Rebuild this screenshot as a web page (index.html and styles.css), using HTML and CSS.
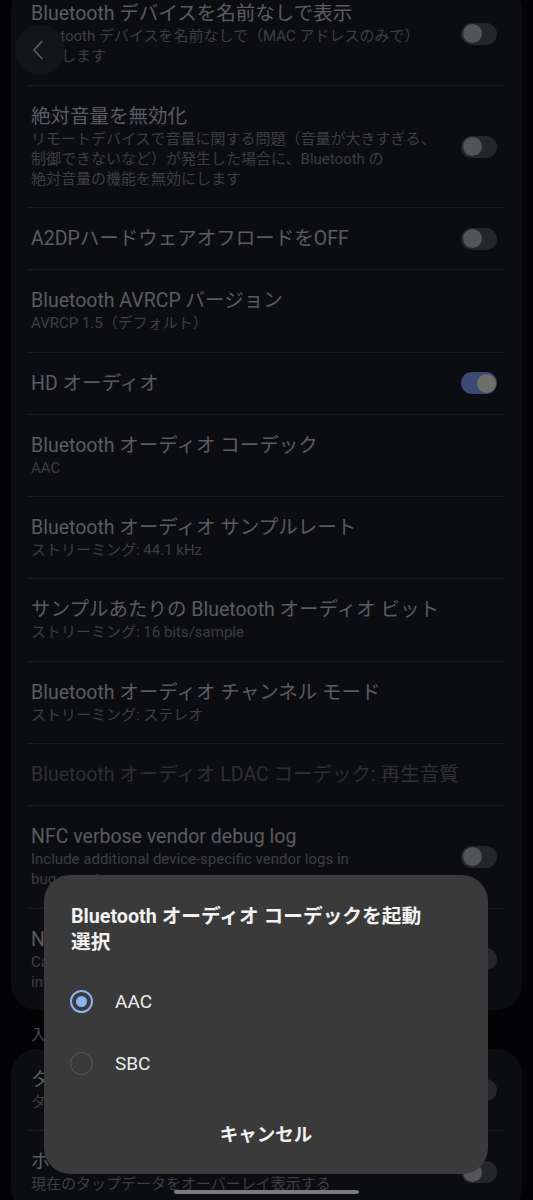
FILE: index.html
```html
<!DOCTYPE html>
<html lang="ja">
<head>
  <meta charset="UTF-8">
  <meta name="viewport" content="width=device-width,initial-scale=1">
  <title>開発者向けオプション</title>
  <link rel="stylesheet" href="styles.css">
</head>
<body>
  <div class="screen">
    <section class="card card-top">
      <div class="row">
        <div class="text">
          <div class="title">Bluetooth デバイスを名前なしで表示</div>
          <div class="summary">Bluetooth デバイスを名前なしで（MAC アドレスのみで）<br>表示します</div>
        </div>
        <span class="switch"><span class="knob"></span></span>
      </div>
      <div class="row">
        <div class="text">
          <div class="title">絶対音量を無効化</div>
          <div class="summary">リモートデバイスで音量に関する問題（音量が大きすぎる、<br>制御できないなど）が発生した場合に、Bluetooth の<br>絶対音量の機能を無効にします</div>
        </div>
        <span class="switch"><span class="knob"></span></span>
      </div>
      <div class="row">
        <div class="text">
          <div class="title">A2DPハードウェアオフロードをOFF</div>
        </div>
        <span class="switch"><span class="knob"></span></span>
      </div>
      <div class="row">
        <div class="text">
          <div class="title">Bluetooth AVRCP バージョン</div>
          <div class="summary">AVRCP 1.5（デフォルト）</div>
        </div>
      </div>
      <div class="row">
        <div class="text">
          <div class="title">HD オーディオ</div>
        </div>
        <span class="switch on"><span class="knob"></span></span>
      </div>
      <div class="row">
        <div class="text">
          <div class="title">Bluetooth オーディオ コーデック</div>
          <div class="summary">AAC</div>
        </div>
      </div>
      <div class="row">
        <div class="text">
          <div class="title">Bluetooth オーディオ サンプルレート</div>
          <div class="summary">ストリーミング: 44.1 kHz</div>
        </div>
      </div>
      <div class="row">
        <div class="text">
          <div class="title">サンプルあたりの Bluetooth オーディオ ビット</div>
          <div class="summary">ストリーミング: 16 bits/sample</div>
        </div>
      </div>
      <div class="row">
        <div class="text">
          <div class="title">Bluetooth オーディオ チャンネル モード</div>
          <div class="summary">ストリーミング: ステレオ</div>
        </div>
      </div>
      <div class="row disabled">
        <div class="text">
          <div class="title">Bluetooth オーディオ LDAC コーデック: 再生音質</div>
        </div>
      </div>
      <div class="row">
        <div class="text">
          <div class="title">NFC verbose vendor debug log</div>
          <div class="summary">Include additional device-specific vendor logs in<br>bug reports.</div>
        </div>
        <span class="switch"><span class="knob"></span></span>
      </div>
      <div class="row">
        <div class="text">
          <div class="title">NFC NCI unfiltered log</div>
          <div class="summary">Capture detail NFC packets, which may contain<br>information.</div>
        </div>
        <span class="switch"><span class="knob"></span></span>
      </div>
    </section>

    <div class="section-label">入力</div>

    <section class="card">
      <div class="row">
        <div class="text">
          <div class="title">タップを表示</div>
          <div class="summary">タップしたときに視覚的フィードバックを表示する</div>
        </div>
        <span class="switch"><span class="knob"></span></span>
      </div>
      <div class="row">
        <div class="text">
          <div class="title">ポインタの位置</div>
          <div class="summary">現在のタップデータをオーバーレイ表示する</div>
        </div>
        <span class="switch"><span class="knob"></span></span>
      </div>
    </section>
  </div>

  <button class="back" aria-label="戻る">
    <svg width="12" height="20" viewBox="0 0 12 20"><path d="M10 1.5 L2 10 L10 18.5" fill="none" stroke="#5f6064" stroke-width="1.6" stroke-linecap="round" stroke-linejoin="round"/></svg>
  </button>

  <div class="dialog" role="dialog">
    <div class="dialog-title">Bluetooth オーディオ コーデックを起動<br>選択</div>
    <div class="option"><span class="radio checked"></span>AAC</div>
    <div class="option"><span class="radio"></span>SBC</div>
    <div class="cancel">キャンセル</div>
  </div>

  <div class="home-bar"></div>
</body>
</html>
```

FILE: styles.css
```css
html { overflow: hidden; }
body { margin: 0; background: #030305; font-family: Roboto, "Noto Sans CJK JP", sans-serif; height: 1200px; overflow: hidden; }
.screen { margin-top: -17px; }
.card { background: #0c0d11; margin: 0 11px; border-radius: 26px; }
.row { display: flex; align-items: center; margin: 0 18px 0 17px; padding: 18px 7px 18px 3px; }
.row + .row { border-top: 1px solid #1b1c20; }
.text { flex: 1; min-width: 0; }
.title { font-size: 19.5px; line-height: 25px; color: #5b5c60; }
.summary { font-size: 15px; line-height: 20.3px; color: #3e3f43; }
.row.disabled .title { color: #2f3034; }
.switch { width: 36px; height: 22px; border-radius: 11px; background: #25262a; display: flex; align-items: center; padding: 0 1.5px; box-sizing: border-box; margin-left: 20px; flex-shrink: 0; }
.knob { width: 19px; height: 19px; border-radius: 50%; background: #535458; }
.switch.on { background: #3a4a72; justify-content: flex-end; }
.switch.on .knob { background: #6f6e6b; }
.section-label { font-size: 15px; line-height: 20px; color: #45464a; padding: 15px 0 4px 31px; }

.back { position: absolute; left: 15px; top: 25px; width: 50px; height: 50px; border-radius: 50%; background: #141519; border: none; padding: 0 4px 0 0; display: flex; align-items: center; justify-content: center; }

.dialog { position: fixed; left: 44px; top: 875px; width: 444px; background: #3a3a3a; border-radius: 26px; padding: 29px 0 18px; box-sizing: border-box; }
.dialog-title { font-size: 19.7px; font-weight: 700; line-height: 26px; color: #f2f2f2; padding: 0 27px; margin-bottom: 14px; }
.option { display: flex; align-items: center; height: 62px; padding: 0 27px 0 26px; font-size: 19px; color: #ececec; }
.radio { width: 23px; height: 23px; border-radius: 50%; border: 1.5px solid #5a5a5a; box-sizing: border-box; margin-right: 22px; flex-shrink: 0; }
.radio.checked { border: 2.5px solid #8cb0f3; display: flex; align-items: center; justify-content: center; }
.radio.checked::after { content: ""; width: 11px; height: 11px; border-radius: 50%; background: #8ab0f6; }
.cancel { margin-top: 16px; height: 46px; display: flex; align-items: center; justify-content: center; font-weight: 700; font-size: 18.5px; color: #f2f2f2; }

.home-bar { position: fixed; left: 174px; bottom: 6px; width: 185px; height: 4px; border-radius: 2px; background: #7a7a7a; }
```
